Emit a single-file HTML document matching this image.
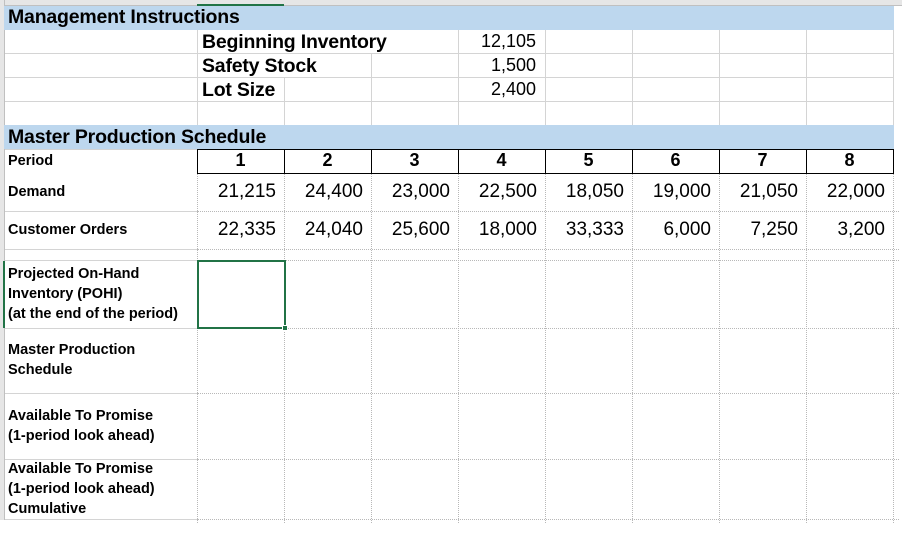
<!DOCTYPE html>
<html><head><meta charset="utf-8"><style>
body{margin:0;width:902px;height:533px;background:#fff;position:relative;overflow:hidden;font-family:"Liberation Sans",Arial,sans-serif;color:#000}
div{position:absolute;box-sizing:border-box}
.h{height:1px;background:#d4d4d4}
.hd{height:0;border-top:1px dotted #b8b8b8}
.v{width:1px;background:#d4d4d4}
.vd{width:0;border-left:1px dotted #b8b8b8}
.blue{background:#bdd7ee;left:4px;width:890px;height:24px}
.t{font-size:19.5px;font-weight:bold;white-space:nowrap;letter-spacing:-0.2px}
.lb{font-size:14.5px;font-weight:bold;line-height:20px;left:8px;white-space:nowrap}
.n{font-size:19px;text-align:right;width:80px;white-space:nowrap}
.p{font-size:18px;font-weight:bold;text-align:center;width:87px;top:150px}
</style></head><body>
<div style="left:0;top:0;width:902px;height:6px;background:#e6e6e6;border-bottom:1px solid #c0c0c0"></div>
<div style="left:197px;top:4px;width:87px;height:2px;background:#217346"></div>
<div style="left:0;top:0;width:5px;height:520px;background:#e6e6e6;border-right:1px solid #c0c0c0"></div>
<div style="left:3px;top:261px;width:2px;height:67px;background:#217346"></div>

<div class="blue" style="top:6px"></div>
<div class="blue" style="top:125px"></div>
<div class="t" style="left:8px;top:6px">Management Instructions</div>
<div class="t" style="left:8px;top:126px">Master Production Schedule</div>

<div class="h" style="left:5px;width:889px;top:53px"></div>
<div class="h" style="left:5px;width:889px;top:77px"></div>
<div class="h" style="left:5px;width:889px;top:101px"></div>
<div class="h" style="left:5px;width:889px;top:149px"></div>
<div class="v" style="left:197px;top:30px;height:95px"></div>
<div class="v" style="left:284px;top:77px;height:48px"></div>
<div class="v" style="left:371px;top:53px;height:72px"></div>
<div class="v" style="left:458px;top:30px;height:95px"></div>
<div class="v" style="left:545px;top:30px;height:95px"></div>
<div class="v" style="left:632px;top:30px;height:95px"></div>
<div class="v" style="left:719px;top:30px;height:95px"></div>
<div class="v" style="left:806px;top:30px;height:95px"></div>
<div class="v" style="left:893px;top:30px;height:95px"></div>

<div class="t" style="left:202px;top:31px">Beginning Inventory</div>
<div class="t" style="left:202px;top:55px">Safety Stock</div>
<div class="t" style="left:202px;top:79px">Lot Size</div>
<div class="n" style="left:456px;top:31px;font-size:18px">12,105</div>
<div class="n" style="left:456px;top:55px;font-size:18px">1,500</div>
<div class="n" style="left:456px;top:79px;font-size:18px">2,400</div>

<div style="left:197px;top:149px;width:697px;height:25px;border:1px solid #000"></div>
<div style="left:284px;top:149px;width:1px;height:25px;background:#000"></div>
<div style="left:371px;top:149px;width:1px;height:25px;background:#000"></div>
<div style="left:458px;top:149px;width:1px;height:25px;background:#000"></div>
<div style="left:545px;top:149px;width:1px;height:25px;background:#000"></div>
<div style="left:632px;top:149px;width:1px;height:25px;background:#000"></div>
<div style="left:719px;top:149px;width:1px;height:25px;background:#000"></div>
<div style="left:806px;top:149px;width:1px;height:25px;background:#000"></div>
<div class="lb" style="top:151px">Period</div>
<div class="p" style="left:197px">1</div><div class="p" style="left:284px">2</div><div class="p" style="left:371px">3</div><div class="p" style="left:458px">4</div><div class="p" style="left:545px">5</div><div class="p" style="left:632px">6</div><div class="p" style="left:719px">7</div><div class="p" style="left:806px">8</div>

<div class="h" style="left:5px;width:192px;top:211px"></div>
<div class="h" style="left:5px;width:192px;top:249px"></div>
<div class="h" style="left:5px;width:192px;top:260px"></div>
<div class="h" style="left:5px;width:192px;top:328px"></div>
<div class="h" style="left:5px;width:192px;top:393px"></div>
<div class="h" style="left:5px;width:192px;top:459px"></div>
<div class="h" style="left:5px;width:192px;top:519px"></div>
<div class="hd" style="left:197px;width:702px;top:211px"></div>
<div class="hd" style="left:197px;width:702px;top:249px"></div>
<div class="hd" style="left:197px;width:702px;top:260px"></div>
<div class="hd" style="left:197px;width:702px;top:328px"></div>
<div class="hd" style="left:197px;width:702px;top:393px"></div>
<div class="hd" style="left:197px;width:702px;top:459px"></div>
<div class="hd" style="left:197px;width:702px;top:519px"></div>
<div class="vd" style="left:197px;top:174px;height:349px"></div>
<div class="vd" style="left:284px;top:174px;height:349px"></div>
<div class="vd" style="left:371px;top:174px;height:349px"></div>
<div class="vd" style="left:458px;top:174px;height:349px"></div>
<div class="vd" style="left:545px;top:174px;height:349px"></div>
<div class="vd" style="left:632px;top:174px;height:349px"></div>
<div class="vd" style="left:719px;top:174px;height:349px"></div>
<div class="vd" style="left:806px;top:174px;height:349px"></div>
<div class="vd" style="left:893px;top:174px;height:349px"></div>

<div class="lb" style="top:182px">Demand</div>
<div class="lb" style="top:220px">Customer Orders</div>
<div class="lb" style="top:264px">Projected On-Hand<br>Inventory (POHI)<br>(at the end of the period)</div>
<div class="lb" style="top:340px">Master Production<br>Schedule</div>
<div class="lb" style="top:406px">Available To Promise<br>(1-period look ahead)</div>
<div class="lb" style="top:459px">Available To Promise<br>(1-period look ahead)<br>Cumulative</div>

<div class="n" style="left:196px;top:181px">21,215</div>
<div class="n" style="left:283px;top:181px">24,400</div>
<div class="n" style="left:370px;top:181px">23,000</div>
<div class="n" style="left:457px;top:181px">22,500</div>
<div class="n" style="left:544px;top:181px">18,050</div>
<div class="n" style="left:631px;top:181px">19,000</div>
<div class="n" style="left:718px;top:181px">21,050</div>
<div class="n" style="left:805px;top:181px">22,000</div>
<div class="n" style="left:196px;top:219px">22,335</div>
<div class="n" style="left:283px;top:219px">24,040</div>
<div class="n" style="left:370px;top:219px">25,600</div>
<div class="n" style="left:457px;top:219px">18,000</div>
<div class="n" style="left:544px;top:219px">33,333</div>
<div class="n" style="left:631px;top:219px">6,000</div>
<div class="n" style="left:718px;top:219px">7,250</div>
<div class="n" style="left:805px;top:219px">3,200</div>

<div style="left:197px;top:260px;width:89px;height:69px;border:2px solid #217346"></div>
<div style="left:282px;top:325px;width:6px;height:6px;background:#217346;border:1px solid #fff"></div>
</body></html>
